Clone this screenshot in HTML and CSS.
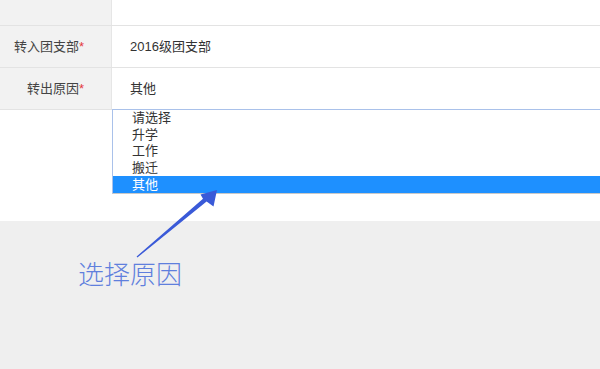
FILE: index.html
```html
<!DOCTYPE html>
<html>
<head>
<meta charset="utf-8"/>
<title>转出申请</title>
<link rel="stylesheet" href="styles.css">
</head>
<body>
	<div class="page">
		<!-- 表单 -->
		<div class="form-box">
			<div class="row row-top">
				<div class="label"></div>
				<div class="value"></div>
			</div>
			<div class="row">
				<div class="label">转入团支部<i>*</i></div>
				<div class="value">2016级团支部</div>
			</div>
			<div class="row">
				<div class="label">转出原因<i>*</i></div>
				<div class="value">其他</div>
			</div>
			<!-- 下拉框 -->
			<div class="select-wrap">
				<ul class="options">
					<li>请选择</li>
					<li>升学</li>
					<li>工作</li>
					<li>搬迁</li>
					<li class="on">其他</li>
				</ul>
			</div>
		</div>
		<!-- 标注 -->
		<div class="note">
			<svg class="arrow" width="100" height="80" viewBox="0 0 100 80">
				<polygon points="6.6,74.5 73,16.8 70.5,12.5 87,8 83.5,24.5 76.6,19.6 7.4,75.5" fill="#3a5ad8"/>
			</svg>
			<p>选择原因</p>
		</div>
	</div>
</body>
</html>
```

FILE: styles.css
```css
*{padding: 0;margin: 0}
html,body{
	width: 100%;
	height: 100%;
}
body{
	background: #efefef;
	font-family: "Liberation Sans", "Noto Sans CJK SC", sans-serif;
	font-size: 13px;
	color: #333;
	overflow: hidden;
}
.page{
	position: relative;
}
.form-box{
	background: #fff;
	padding-bottom: 27px;
}
.row{
	display: grid;
	grid-template-columns: 112px 1fr;
	height: 41px;
	border-bottom: 1px solid #e3e3e3;
}
.row-top{
	height: 25px;
}
.row .label{
	background: #f2f2f2;
	border-right: 1px solid #e6e6e6;
	text-align: right;
	padding-right: 27px;
	line-height: 41px;
	color: #444;
}
.row .label i{
	font-style: normal;
	color: #e4393c;
}
.row .value{
	padding-left: 18px;
	line-height: 41px;
}
.select-wrap{
	padding-left: 112px;
	margin-top: -1px;
}
.options{
	list-style: none;
	border: 1px solid #a9c1ea;
	border-right: none;
	border-bottom-color: #c8c8c8;
}
.options li{
	height: 16.5px;
	line-height: 15px;
	padding-left: 19px;
	color: #333;
}
.options li.on{
	height: 17px;
	background: #1e90ff;
	color: #fff;
	line-height: 17px;
}
.note{
	padding: 36px 0 0 78px;
}
.note p{
	font-family: "Noto Sans CJK SC", sans-serif;
	font-weight: 300;
	font-size: 26px;
	line-height: 32px;
	color: #5f7fdd;
}
.arrow{
	position: absolute;
	left: 130px;
	top: 182px;
}
```
